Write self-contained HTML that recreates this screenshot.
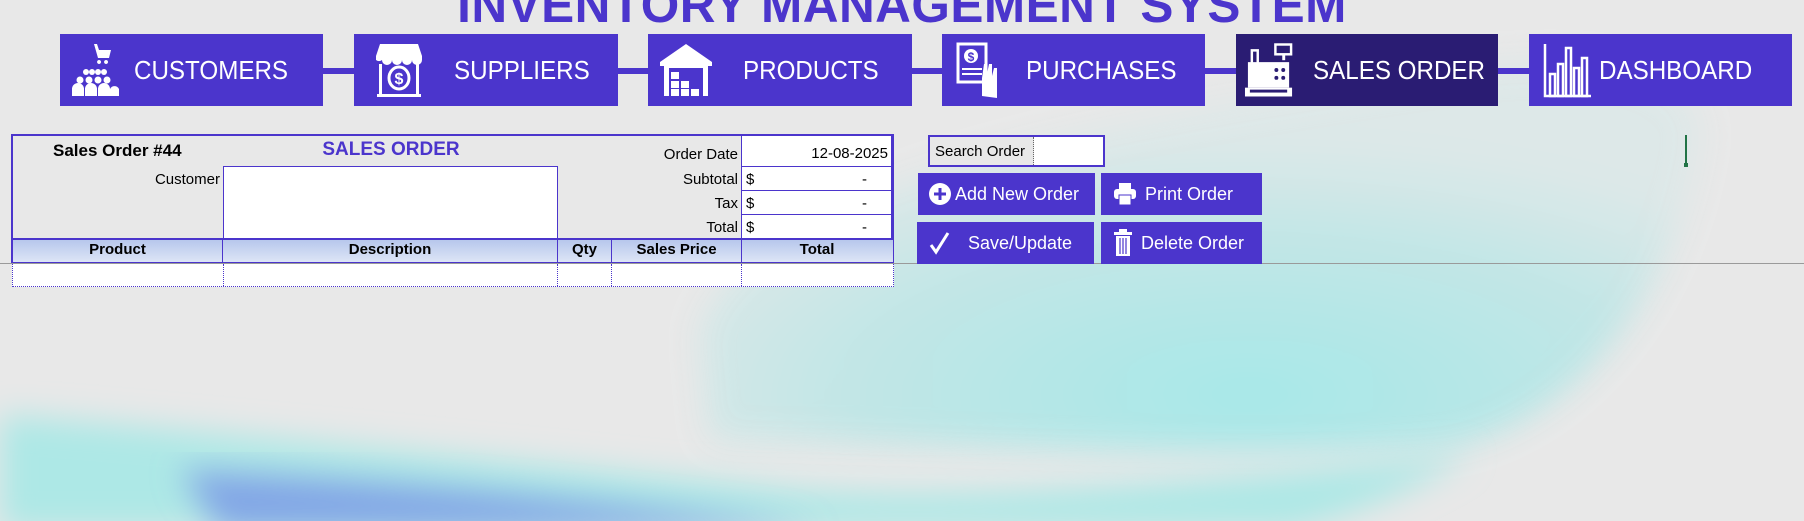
<!DOCTYPE html>
<html><head><meta charset="utf-8"><style>
*{margin:0;padding:0;box-sizing:border-box}
body{width:1804px;height:521px;background:#e8e8e8;position:relative;overflow:hidden;font-family:"Liberation Sans",sans-serif}
.abs{position:absolute}
.title{left:0;width:1804px;top:-24px;text-align:center;font-weight:bold;font-size:50px;color:#4b35cc;letter-spacing:0.5px;transform:scaleX(0.99);transform-origin:903px 0;white-space:nowrap}
.nav{background:#4b35cc;color:#fff;height:72px;top:34px;display:flex;align-items:center;font-size:26px;white-space:nowrap}
.nav span{display:inline-block;transform:scaleX(0.93);transform-origin:left;white-space:nowrap}
.conn{background:#4b35cc;height:6px;top:68px}
.cell{position:absolute;border:1px solid #4b35cc;background:#fff}
.lbl{position:absolute;font-size:15px;color:#000;text-align:right}
.hdr{position:absolute;top:238px;height:24px;font-weight:bold;font-size:15px;text-align:center;line-height:24px;border-right:1px solid #4b35cc}
.btn{position:absolute;background:#4b35cc;color:#fff;font-size:18px;display:flex;align-items:center;white-space:nowrap}
</style></head><body>
<svg class="abs" style="left:0;top:0" width="1804" height="521">
<defs>
<filter id="b1" x="-30%" y="-30%" width="160%" height="160%"><feGaussianBlur stdDeviation="16"/></filter>
<radialGradient id="g1" cx="0.55" cy="0.85" r="0.65"><stop offset="0" stop-color="#a4e8e8"/><stop offset="0.6" stop-color="#bfe6e6"/><stop offset="1" stop-color="#dde8e8"/></radialGradient>
</defs>
<path d="M700 330 C760 180 1100 120 1450 70 C1600 50 1690 70 1700 130 C1680 300 1560 440 1427 449 C1200 460 1000 445 710 440 Z" fill="url(#g1)" filter="url(#b1)" opacity="0.95"/>
<path d="M0 415 C200 430 500 460 800 490 C1000 505 1300 470 1470 455 C1400 500 1330 521 1290 530 L0 530 Z" fill="#ade8e6" filter="url(#b1)"/>
<path d="M180 470 C380 480 600 500 820 530 L220 530 Z" fill="#82a6e6" filter="url(#b1)"/>
</svg>
<div class="abs title">INVENTORY MANAGEMENT SYSTEM</div>

<div class="abs conn" style="left:320px;width:40px"></div>
<div class="abs conn" style="left:615px;width:40px"></div>
<div class="abs conn" style="left:909px;width:40px"></div>
<div class="abs conn" style="left:1202px;width:40px"></div>
<div class="abs conn" style="left:1495px;width:40px"></div>

<div class="abs nav" style="left:60px;width:263px">
<svg style="margin-left:10px" width="50" height="56" viewBox="0 0 50 56" fill="#fff"><path d="M24 2h3l2 6h12l-2 8h-11zM29 18a2 2 0 1 0 0.1 0M36 18a2 2 0 1 0 0.1 0"/><circle cx="16" cy="30" r="3"/><circle cx="22" cy="30" r="3"/><circle cx="28" cy="30" r="3"/><circle cx="34" cy="30" r="3"/><circle cx="10" cy="38" r="3.5"/><circle cx="19" cy="38" r="3.5"/><circle cx="28" cy="38" r="3.5"/><circle cx="37" cy="38" r="3.5"/><path d="M2 54v-7a6 6 0 0 1 12 0v7zM15 54v-7a6 6 0 0 1 12 0v7zM28 54v-7a6 6 0 0 1 12 0v7zM40 54v-7a5 5 0 0 1 9 0v7z"/></svg>
<span style="margin-left:14px">CUSTOMERS</span></div>
<div class="abs nav" style="left:354px;width:264px">
<svg style="margin-left:20px" width="50" height="56" viewBox="0 0 50 56" fill="#fff"><path d="M6 2h38l4 12H2z"/><path d="M2 14h46v4a5 5 0 0 1-10 0 5 5 0 0 1-10 0 5 5 0 0 1-10 0 5 5 0 0 1-10 0 5 5 0 0 1-6 0z"/><path d="M5 22v30h-2v3h44v-3h-2V22h-3v30H8V22z"/><ellipse cx="25" cy="36" rx="10" ry="11" fill="none" stroke="#fff" stroke-width="3"/><text x="25" y="42" font-size="16" font-weight="bold" text-anchor="middle" font-family="Liberation Sans">$</text></svg>
<span style="margin-left:30px">SUPPLIERS</span></div>
<div class="abs nav" style="left:648px;width:264px">
<svg style="margin-left:10px" width="56" height="56" viewBox="0 0 56 56" fill="#fff"><path d="M28 2L2 20v4h4v30h5V26h34v28h5V24h4v-4z"/><rect x="13" y="30" width="8" height="7"/><rect x="13" y="39" width="8" height="7"/><rect x="23" y="39" width="8" height="7"/><rect x="13" y="47" width="8" height="7"/><rect x="23" y="47" width="8" height="7"/><rect x="33" y="47" width="8" height="7"/></svg>
<span style="margin-left:29px">PRODUCTS</span></div>
<div class="abs nav" style="left:942px;width:263px">
<svg style="margin-left:14px" width="46" height="56" viewBox="0 0 46 56" fill="#fff"><path d="M2 2h28v38H2z" fill="none" stroke="#fff" stroke-width="3"/><circle cx="15" cy="14" r="7"/><text x="15" y="19" font-size="12" font-weight="bold" text-anchor="middle" fill="#4b35cc" font-family="Liberation Sans">$</text><rect x="6" y="26" width="20" height="2"/><rect x="6" y="31" width="20" height="2"/><path d="M26 54V36l2-14h3v10l2-10h3v12l2-8h3v30z"/></svg>
<span style="margin-left:24px">PURCHASES</span></div>
<div class="abs nav" style="left:1236px;width:262px;background:#2a1c73">
<svg style="margin-left:8px" width="50" height="56" viewBox="0 0 50 56" fill="#fff"><rect x="32" y="2" width="16" height="10" fill="none" stroke="#fff" stroke-width="2.5"/><rect x="39" y="12" width="3" height="6"/><path d="M8 8h6v14H8z" fill="none" stroke="#fff" stroke-width="2.5"/><path d="M4 20h42v26H4z"/><circle cx="33" cy="28" r="2" fill="#2a1c73"/><circle cx="40" cy="28" r="2" fill="#2a1c73"/><circle cx="33" cy="36" r="2" fill="#2a1c73"/><circle cx="40" cy="36" r="2" fill="#2a1c73"/><rect x="1" y="46" width="48" height="9"/><rect x="6" y="48" width="38" height="3" fill="#2a1c73"/></svg>
<span style="margin-left:20px">SALES ORDER</span></div>
<div class="abs nav" style="left:1529px;width:263px">
<svg style="margin-left:14px" width="50" height="56" viewBox="0 0 50 56" fill="none" stroke="#fff" stroke-width="2.5"><path d="M2 2v52h46"/><rect x="7" y="32" width="5" height="22"/><rect x="15" y="22" width="5" height="32"/><rect x="23" y="6" width="5" height="48"/><rect x="31" y="26" width="5" height="28"/><rect x="39" y="16" width="5" height="38"/></svg>
<span style="margin-left:6px">DASHBOARD</span></div>

<!-- form -->
<div class="abs" style="left:11px;top:134px;width:883px;height:129px;border:2px solid #4b35cc"></div>
<div class="abs" style="left:53px;top:141px;font-weight:bold;font-size:17px">Sales Order #44</div>
<div class="abs" style="left:300px;top:139px;width:182px;text-align:center;font-weight:bold;font-size:19px;color:#4b35cc">SALES ORDER</div>
<div class="lbl" style="left:100px;width:120px;top:171px">Customer</div>
<div class="cell" style="left:223px;top:166px;width:335px;height:26px"></div>
<div class="cell" style="left:223px;top:190px;width:335px;height:49px;border-top:none"></div>
<div class="lbl" style="left:600px;width:138px;top:146px">Order Date</div>
<div class="lbl" style="left:600px;width:138px;top:171px">Subtotal</div>
<div class="lbl" style="left:600px;width:138px;top:195px">Tax</div>
<div class="lbl" style="left:600px;width:138px;top:219px">Total</div>
<div class="cell" style="left:741px;top:135px;width:151px;height:33px;font-size:15px;text-align:right;padding:9px 3px 0 0">12-08-2025</div>
<div class="cell" style="left:741px;top:166px;width:151px;height:26px;font-size:15px;padding:4px 4px">$<span style="float:right;margin-right:20px">-</span></div>
<div class="cell" style="left:741px;top:190px;width:151px;height:26px;font-size:15px;padding:4px 4px">$<span style="float:right;margin-right:20px">-</span></div>
<div class="cell" style="left:741px;top:214px;width:151px;height:25px;font-size:15px;padding:4px 4px">$<span style="float:right;margin-right:20px">-</span></div>
<div class="abs" style="left:13px;top:238px;width:880px;height:24px;border-top:2px solid #4b35cc;background:linear-gradient(#b7c7ec,#dde5f6)"></div>
<div class="hdr" style="left:13px;width:210px">Product</div>
<div class="hdr" style="left:223px;width:335px">Description</div>
<div class="hdr" style="left:558px;width:54px">Qty</div>
<div class="hdr" style="left:612px;width:130px">Sales Price</div>
<div class="hdr" style="left:742px;width:150px;border-right:none">Total</div>
<div class="abs" style="left:0;top:263px;width:1804px;height:1px;background:#9a9a9a"></div>
<div class="abs" style="left:12px;top:264px;width:882px;height:23px;background:#fff;border:1px dotted #4b35cc;border-top:none"></div>
<div class="abs" style="left:223px;top:264px;height:22px;border-left:1px dotted #4b35cc"></div>
<div class="abs" style="left:557px;top:264px;height:22px;border-left:1px dotted #4b35cc"></div>
<div class="abs" style="left:611px;top:264px;height:22px;border-left:1px dotted #4b35cc"></div>
<div class="abs" style="left:741px;top:264px;height:22px;border-left:1px dotted #4b35cc"></div>

<!-- right controls -->
<div class="abs" style="left:928px;top:135px;width:177px;height:32px;border:2px solid #4b35cc;background:#fff"></div>
<div class="abs" style="left:930px;top:137px;width:104px;height:28px;background:#e8e8e8;border-right:1px dotted #666;font-size:15px;padding:6px 0 0 5px">Search Order</div>
<div class="btn" style="left:918px;top:173px;width:177px;height:42px"><svg style="margin-left:10px" width="24" height="24" viewBox="0 0 24 24"><circle cx="12" cy="12" r="11" fill="#fff"/><path d="M12 6v12M6 12h12" stroke="#4b35cc" stroke-width="3"/></svg><span style="margin-left:3px">Add New Order</span></div>
<div class="btn" style="left:1101px;top:173px;width:161px;height:42px"><svg style="margin-left:12px" width="24" height="24" viewBox="0 0 24 24" fill="#fff"><rect x="6" y="1" width="12" height="6"/><rect x="1" y="7" width="22" height="10" rx="3"/><rect x="6" y="13" width="12" height="10" stroke="#4b35cc" stroke-width="1"/></svg><span style="margin-left:8px">Print Order</span></div>
<div class="btn" style="left:917px;top:222px;width:177px;height:42px"><svg style="margin-left:12px" width="22" height="24" viewBox="0 0 22 24"><path d="M2 14l5 7L19 2" fill="none" stroke="#fff" stroke-width="3"/></svg><span style="margin-left:17px">Save/Update</span></div>
<div class="btn" style="left:1101px;top:222px;width:161px;height:42px"><svg style="margin-left:12px" width="20" height="28" viewBox="0 0 20 28" fill="#fff"><rect x="6" y="0" width="8" height="3"/><rect x="1" y="3" width="18" height="3"/><path d="M3 7h14v20H3z"/><path d="M7 9v16M10 9v16M13 9v16" stroke="#4b35cc" stroke-width="1.2"/></svg><span style="margin-left:8px">Delete Order</span></div>
<div class="abs" style="left:1685px;top:135px;width:2px;height:30px;background:#217346"></div>
<div class="abs" style="left:1684px;top:163px;width:4px;height:4px;background:#217346"></div>
</body></html>
